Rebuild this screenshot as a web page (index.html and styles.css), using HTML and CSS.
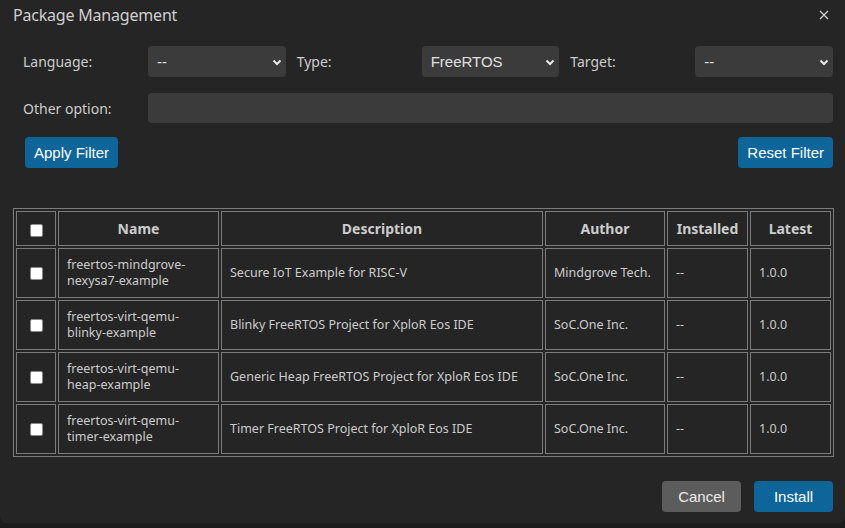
FILE: index.html
```html
<!DOCTYPE html>
<html>
<head>
<meta charset="utf-8">
<link rel="stylesheet" href="styles.css">
</head>
<body>
<div class="dialog">
  <div class="titlebar">
    <span class="title">Package Management</span>
    <span class="close">
      <svg width="10" height="10" viewBox="0 0 10 10"><path d="M1 1L9 9M9 1L1 9" stroke="#cfcfcf" stroke-width="1.2"/></svg>
    </span>
  </div>
  <div class="filters">
    <div class="pair"><label>Language:</label><div class="select"><span>--</span><svg class="chev" width="10" height="7" viewBox="0 0 10 7"><path d="M1.5 1.5L5 5L8.5 1.5" fill="none" stroke="#e8e8e8" stroke-width="2"/></svg></div></div>
    <div class="pair"><label>Type:</label><div class="select"><span>FreeRTOS</span><svg class="chev" width="10" height="7" viewBox="0 0 10 7"><path d="M1.5 1.5L5 5L8.5 1.5" fill="none" stroke="#e8e8e8" stroke-width="2"/></svg></div></div>
    <div class="pair"><label>Target:</label><div class="select"><span>--</span><svg class="chev" width="10" height="7" viewBox="0 0 10 7"><path d="M1.5 1.5L5 5L8.5 1.5" fill="none" stroke="#e8e8e8" stroke-width="2"/></svg></div></div>
  </div>
  <div class="other">
    <label>Other option:</label>
    <div class="input"></div>
  </div>
  <div class="filter-actions">
    <button class="btn primary">Apply Filter</button>
    <button class="btn primary">Reset Filter</button>
  </div>
  <table class="pkgs">
    <colgroup>
      <col class="c-check"><col class="c-name"><col class="c-desc"><col class="c-author"><col class="c-inst"><col class="c-latest">
    </colgroup>
    <thead>
      <tr>
        <th class="chk"><span class="box"></span></th>
        <th>Name</th>
        <th>Description</th>
        <th>Author</th>
        <th>Installed</th>
        <th>Latest</th>
      </tr>
    </thead>
    <tbody>
      <tr>
        <td class="chk"><span class="box"></span></td>
        <td><span class="ln">freertos-mindgrove-</span><span class="ln">nexysa7-example</span></td>
        <td>Secure IoT Example for RISC-V</td>
        <td>Mindgrove Tech.</td>
        <td>--</td>
        <td>1.0.0</td>
      </tr>
      <tr>
        <td class="chk"><span class="box"></span></td>
        <td><span class="ln">freertos-virt-qemu-</span><span class="ln">blinky-example</span></td>
        <td>Blinky FreeRTOS Project for XploR Eos IDE</td>
        <td>SoC.One Inc.</td>
        <td>--</td>
        <td>1.0.0</td>
      </tr>
      <tr>
        <td class="chk"><span class="box"></span></td>
        <td><span class="ln">freertos-virt-qemu-</span><span class="ln">heap-example</span></td>
        <td>Generic Heap FreeRTOS Project for XploR Eos IDE</td>
        <td>SoC.One Inc.</td>
        <td>--</td>
        <td>1.0.0</td>
      </tr>
      <tr>
        <td class="chk"><span class="box"></span></td>
        <td><span class="ln">freertos-virt-qemu-</span><span class="ln">timer-example</span></td>
        <td>Timer FreeRTOS Project for XploR Eos IDE</td>
        <td>SoC.One Inc.</td>
        <td>--</td>
        <td>1.0.0</td>
      </tr>
    </tbody>
  </table>
  <div class="footer">
    <button class="btn secondary">Cancel</button>
    <button class="btn primary">Install</button>
  </div>
</div>
</body>
</html>
```

FILE: styles.css
```css
html, body {
  margin: 0;
  padding: 0;
  background: #1b1b1b;
  width: 845px;
  height: 528px;
  overflow: hidden;
}
.dialog {
  width: 845px;
  height: 523px;
  background: #252525;
  border-radius: 0 0 6px 6px;
  color: #cccccc;
  font-family: "Noto Sans", "Open Sans", sans-serif;
  box-sizing: border-box;
  display: flex;
  flex-direction: column;
}
.titlebar {
  height: 30px;
  display: flex;
  align-items: center;
  justify-content: space-between;
  padding: 0 16px 0 13px;
}
.title {
  font-size: 16px;
  color: #cfcfcf;
  letter-spacing: -0.2px;
}
.close {
  display: flex;
  margin-top: -1px;
}
.filters {
  margin: 16px 12px 0 23px;
  display: grid;
  grid-template-columns: 1fr 1fr 1fr;
  column-gap: 11px;
}
.pair {
  display: grid;
  grid-template-columns: 125px 1fr;
  align-items: center;
}
label {
  font-size: 14px;
  color: #cccccc;
}
.select {
  height: 31px;
  background: #3b3b3b;
  border-radius: 4px;
  display: flex;
  align-items: center;
  justify-content: space-between;
  padding: 0 4px 0 9px;
  font-family: "Liberation Sans", Arial, sans-serif;
  font-size: 15px;
  color: #e0e0e0;
}
.chev { margin-top: 1px; }
.other {
  margin: 16px 12px 0 23px;
  display: grid;
  grid-template-columns: 125px 1fr;
  align-items: center;
}
.input {
  height: 30px;
  background: #3b3b3b;
  border-radius: 4px;
}
.filter-actions {
  margin: 14px 12px 0 25px;
  display: flex;
  justify-content: space-between;
}
.btn {
  height: 31px;
  border: none;
  border-radius: 4px;
  font-family: "Liberation Sans", Arial, sans-serif;
  font-size: 15px;
  color: #ffffff;
  padding: 0 9px;
}
.primary { background: #0e659a; }
.secondary { background: #5c5c5c; color: #ececec; }
.pkgs {
  margin: 40px 0 0 13px;
  width: 820px;
  border: 1px solid #7c7c7c;
  border-spacing: 2px;
  table-layout: fixed;
  font-size: 12.5px;
  color: #cccccc;
}
.c-check { width: 40px; }
.c-name { width: 161px; }
.c-desc { width: 322px; }
.c-author { width: 120px; }
.c-inst { width: 81px; }
.c-latest { width: 81px; }
th, td {
  border: 1px solid #7c7c7c;
  text-align: left;
  padding: 0 8px;
}
th {
  height: 33px;
  text-align: center;
  font-size: 14px;
  font-weight: bold;
  color: #cccccc;
  padding: 0 4px;
}
td {
  height: 48px;
  line-height: 16px;
}
.ln {
  display: block;
  height: 16px;
  line-height: 16px;
  white-space: nowrap;
}
.chk { text-align: center; padding: 0; }
.box {
  display: inline-block;
  width: 11px;
  height: 11px;
  background: #ffffff;
  border: 1px solid #8a8a8a;
  border-radius: 2px;
  vertical-align: middle;
}
.footer {
  margin: 24px 12px 0 0;
  display: flex;
  justify-content: flex-end;
  gap: 13px;
}
.footer .btn { width: 79px; padding: 0; }
```
